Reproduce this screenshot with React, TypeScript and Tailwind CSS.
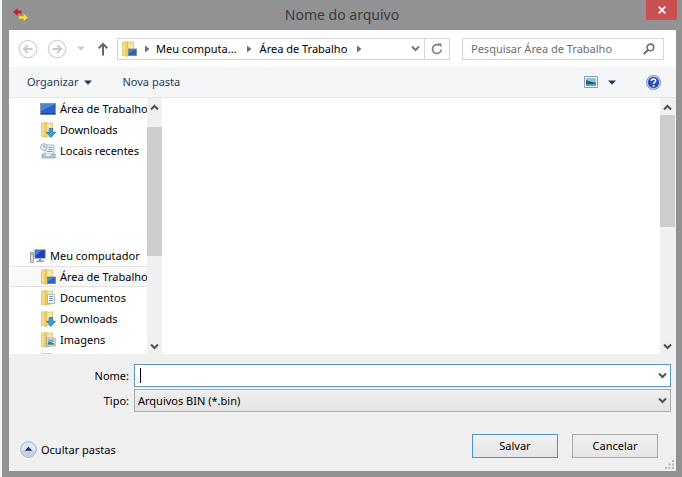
import React from "react";

type IconProps = { className?: string };

function Chevron({ up = false, light = false }: { up?: boolean; light?: boolean }) {
  return (
    <svg width="9" height="7" viewBox="0 0 9 7" fill="none" stroke={light ? "#777" : "#505050"} strokeWidth="2" aria-hidden="true">
      <path d={up ? "M1 5.5 4.5 2 8 5.5" : "M1 1.5 4.5 5 8 1.5"} />
    </svg>
  );
}

function RightTriangle() {
  return (
    <svg width="5" height="8" viewBox="0 0 5 8" aria-hidden="true">
      <path d="M0 0.5 4.5 4 0 7.5Z" fill="#6f6f6f" />
    </svg>
  );
}

function DownTriangle({ className = "text-[#1e395b]" }: IconProps) {
  return (
    <svg className={className} width="8" height="5" viewBox="0 0 8 5" aria-hidden="true">
      <path d="M0 0.5H8L4 4.8Z" fill="currentColor" />
    </svg>
  );
}

function FolderBase() {
  return (
    <>
      <path d="M1.5 1 7 .4V14l-5.5.8Z" fill="#f3dd86" stroke="#d9bd5c" strokeWidth=".7" />
      <path d="M5 1.6 12.5.8V13.6L5 15.4Z" fill="#f8e9a6" stroke="#d6ba5a" strokeWidth=".7" />
      <path d="M5 1.6V15.4L7.2 14.8V1.5Z" fill="#e7c964" />
    </>
  );
}

type Kind = "desktop" | "downloads" | "recent" | "computer" | "desktopFolder" | "documents" | "pictures" | "folder";

function ItemIcon({ kind }: { kind: Kind }) {
  return (
    <svg className="shrink-0" width="16" height="16" viewBox="0 0 16 16" aria-hidden="true">
      {kind === "desktop" && (
        <>
          <rect x=".5" y="2.5" width="15" height="11" fill="#2c62bd" stroke="#7f95ad" />
          <path d="M1 3H15L1 10Z" fill="#4a86dc" />
          <path d="M1 12H15V13.2H1Z" fill="#25426f" />
        </>
      )}
      {kind === "computer" && (
        <>
          <rect x=".6" y="4.5" width="2.8" height="10" fill="#d5dae1" stroke="#8692a3" strokeWidth=".8" />
          <path d="M1.3 6.4H2.8" stroke="#4b5d79" strokeWidth=".8" />
          <rect x="4.6" y="1.6" width="10.8" height="8.8" fill="#1f3fb3" stroke="#a9b5c8" strokeWidth="1" />
          <path d="M5.2 2.2H12L5.2 8Z" fill="#5279dd" />
          <path d="M9 10.8H11.4V12.6H14V14H6.4V12.6H9Z" fill="#8f9cae" />
        </>
      )}
      {kind === "recent" && (
        <>
          <path d="M5 2H14V12H5Z" fill="#eef5fb" stroke="#8aa4bc" strokeWidth=".8" />
          <path d="M8.5 4.5H12.5M8.5 6.5H12.5M7 8.5H12.5" stroke="#5f9bcb" />
          <path d="M2 11H15.2V15H2Z" fill="#b9c6d2" stroke="#8899a8" strokeWidth=".7" />
          <path d="M5 11H11L9.8 13H6.2Z" fill="#eef2f5" />
          <circle cx="3.9" cy="4" r="3.3" fill="#f4f6f7" stroke="#939da6" strokeWidth=".9" />
          <path d="M3.9 2V4.2H5.6" fill="none" stroke="#54616c" strokeWidth=".8" />
        </>
      )}
      {kind === "downloads" && (
        <>
          <FolderBase />
          <path d="M9.2 6.5H12.8V10.3H15.5L11 15.5 6.5 10.3H9.2Z" fill="#3f9ed6" stroke="#2474ac" strokeWidth=".8" />
        </>
      )}
      {kind === "desktopFolder" && (
        <>
          <FolderBase />
          <rect x="7.5" y="8" width="8" height="6.6" fill="#2f63ad" stroke="#6c88ab" strokeWidth=".8" />
          <path d="M8 8.5H14L8 12.5Z" fill="#5288cf" />
        </>
      )}
      {kind === "documents" && (
        <>
          <FolderBase />
          <path d="M7.5 4.5H14.5V13.5H7.5Z" fill="#fbfcfe" stroke="#9ba9b7" strokeWidth=".8" />
          <path d="M9 6.5H13M9 8.5H13M9 10.5H13" stroke="#6f8bb0" strokeWidth=".9" />
        </>
      )}
      {kind === "pictures" && (
        <>
          <FolderBase />
          <path d="M6.5 6H15.2V14H6.5Z" fill="#eaf4fa" stroke="#8b9cab" strokeWidth=".8" />
          <path d="M7.6 7.2H14.1V10H7.6Z" fill="#73b7dd" />
          <path d="M7.6 12.8V10.6L10 9.8 14.1 11.2V12.8Z" fill="#47805d" />
        </>
      )}
      {kind === "folder" && <path d="M1 0H12V15H1Z" fill="#eed98a" />}
    </svg>
  );
}

function TreeItem({ kind, label, root = false, selected = false }: { kind: Kind; label?: string; root?: boolean; selected?: boolean }) {
  return (
    <li>
      <button
        type="button"
        className={
          "flex h-[21px] w-full items-center border-y text-left whitespace-nowrap " +
          (root ? "gap-1 pl-5 " : "gap-1 pl-[30px] ") +
          (selected ? "border-[#e2e2e2] bg-[#f9f9f9]" : "border-transparent")
        }
      >
        <ItemIcon kind={kind} />
        {label && <span>{label}</span>}
      </button>
    </li>
  );
}

function ScrollBar({ lead, thumb }: { lead: string; thumb: string }) {
  return (
    <div className="flex w-[15px] shrink-0 flex-col items-center bg-[#f0f0f0]">
      <div className={"flex shrink-0 justify-center pt-1.5 " + lead}>
        <Chevron up />
      </div>
      <div className={"w-full shrink-0 bg-[#cdcdcd] " + thumb} />
      <div className="mt-auto pb-1">
        <Chevron />
      </div>
    </div>
  );
}

function NavCircle({ label, forward = false }: { label: string; forward?: boolean }) {
  return (
    <button type="button" aria-label={label}>
      <svg width="20" height="20" viewBox="0 0 20 20" fill="none" aria-hidden="true">
        <circle cx="10" cy="10" r="8.7" stroke="#d3d3d3" strokeWidth="1.3" />
        <path
          d={forward ? "M5.5 10H14M10.3 6.2 14 10 10.3 13.8" : "M14.5 10H6M9.7 6.2 6 10 9.7 13.8"}
          stroke="#c8c8c8"
          strokeWidth="1.8"
        />
      </svg>
    </button>
  );
}

export default function App() {
  return (
    <div className="flex min-h-screen flex-col border-l-2 border-[#f4f4f4] bg-[#929294] pr-1.5 pb-1.5 pl-[7px] font-['Noto_Sans','Open_Sans',sans-serif] text-[11px] leading-4 text-black">
      <header className="relative flex h-[30px] items-center">
        <svg className="ml-1" width="15" height="14" viewBox="0 0 15 14" aria-hidden="true">
          <path d="M0 4 4.5 0V2.6H8.5V5.4H4.5V8Z" fill="#c3202f" />
          <path d="M15 9.5 10.5 5.5V8.1H5.5V10.9H10.5V13.5Z" fill="#f3e04a" stroke="#b59b28" strokeWidth=".5" />
        </svg>
        <h1 className="flex-1 pr-5 text-center text-sm text-[#3b3b3b]">Nome do arquivo</h1>
        <button type="button" aria-label="Fechar" className="absolute -right-px top-0 flex h-5 w-[31px] items-center justify-center bg-[#c8504f]">
          <svg width="8" height="8" viewBox="0 0 8 8" stroke="#fff" strokeWidth="1.7" aria-hidden="true">
            <path d="M.7.7 7.3 7.3M7.3.7.7 7.3" />
          </svg>
        </button>
      </header>

      <main className="flex flex-1 flex-col bg-[#f0f0f0]">
        <nav className="flex h-[37px] items-center bg-white pr-3 pl-[9px]">
          <div className="flex items-center gap-[9px]">
            <NavCircle label="Voltar" />
            <NavCircle label="Avançar" forward />
          </div>
          <button type="button" aria-label="Locais anteriores" className="ml-2.5">
            <DownTriangle className="text-[#cccccc]" />
          </button>
          <button type="button" aria-label="Acima" className="mr-2 ml-3">
            <svg width="12" height="14" viewBox="0 0 12 14" fill="none" stroke="#686868" strokeWidth="2" aria-hidden="true">
              <path d="M6 13.5V2M1.7 6.3 6 2 10.3 6.3" />
            </svg>
          </button>
          <div className="flex h-[22px] min-w-0 flex-1 items-center border border-[#d5d5d5] pl-[3px] whitespace-nowrap">
            <ItemIcon kind="desktopFolder" />
            <span className="ml-2"><RightTriangle /></span>
            <button type="button" className="ml-1.5">Meu computa...</button>
            <span className="ml-2.5"><RightTriangle /></span>
            <button type="button" className="ml-2">Área de Trabalho</button>
            <span className="ml-2.5"><RightTriangle /></span>
            <button type="button" aria-label="Locais recentes" className="mr-1 ml-auto"><Chevron light /></button>
            <button type="button" aria-label="Atualizar" className="flex h-full w-[25px] items-center justify-center border-l border-[#d5d5d5]">
              <svg width="12" height="12" viewBox="0 0 12 12" fill="none" aria-hidden="true">
                <path d="M8.2 2.3A4.4 4.4 0 1 0 10.3 6.5" stroke="#858585" strokeWidth="1.7" />
                <path d="M6.3.3H10.5V4.6Z" fill="#858585" />
              </svg>
            </button>
          </div>
          <div className="ml-3 flex h-[22px] w-[202px] items-center border border-[#d5d5d5] pr-2 pl-2">
            <input
              type="search"
              aria-label="Pesquisar"
              placeholder="Pesquisar Área de Trabalho"
              className="min-w-0 flex-1 bg-transparent outline-none placeholder:text-[#6d6d6d]"
            />
            <svg width="12" height="12" viewBox="0 0 12 12" fill="none" stroke="#6d6d6d" aria-hidden="true">
              <circle cx="7.4" cy="4.4" r="3.3" strokeWidth="1.6" />
              <path d="M5 6.8.9 11" strokeWidth="2" />
            </svg>
          </div>
        </nav>

        <div className="flex h-[31px] items-center border-b border-[#e3e5e8] bg-[#f4f6f8] pr-[15px] pl-[18px] text-[#1e395b]">
          <button type="button" className="flex items-center gap-1.5">Organizar <DownTriangle /></button>
          <button type="button" className="ml-[30px]">Nova pasta</button>
          <button type="button" aria-label="Modo de exibição" className="ml-auto">
            <svg width="14" height="12" viewBox="0 0 14 12" aria-hidden="true">
              <path d="M.5.5H13.5V11.5H.5Z" fill="#fff" stroke="#8b9bad" />
              <path d="M2 2H12V6H2Z" fill="#8cc5e6" />
              <path d="M2 4 6 5.5 12 6.5V10H2Z" fill="#245a73" />
              <path d="M2 8.5 12 7.5V10H2Z" fill="#609dbd" />
            </svg>
          </button>
          <button type="button" aria-label="Mais opções" className="ml-2.5"><DownTriangle /></button>
          <button type="button" aria-label="Ajuda" className="ml-[30px]">
            <svg width="15" height="15" viewBox="0 0 14 14" aria-hidden="true">
              <circle cx="7" cy="7" r="6.5" fill="#d5dcef" stroke="#8e9cc0" />
              <circle cx="7" cy="7" r="5.3" fill="#2d50b4" />
              <path d="M5 5.6C5 3.2 9 3.2 9 5.4 9 6.8 7.1 6.8 7.1 8.4" fill="none" stroke="#fff" strokeWidth="1.4" />
              <circle cx="7.1" cy="10.2" r=".9" fill="#fff" />
            </svg>
          </button>
        </div>

        <section className="flex h-64 bg-white">
          <div className="w-[138px] shrink-0 overflow-hidden pl-px">
            <ul>
              <TreeItem kind="desktop" label="Área de Trabalho" />
              <TreeItem kind="downloads" label="Downloads" />
              <TreeItem kind="recent" label="Locais recentes" />
            </ul>
            <ul className="mt-[84px]">
              <TreeItem kind="computer" label="Meu computador" root />
              <TreeItem kind="desktopFolder" label="Área de Trabalho" selected />
              <TreeItem kind="documents" label="Documentos" />
              <TreeItem kind="downloads" label="Downloads" />
              <TreeItem kind="pictures" label="Imagens" />
              <TreeItem kind="folder" />
            </ul>
          </div>
          <ScrollBar lead="h-[29px]" thumb="h-[129px]" />
          <div className="flex-1" />
          <ScrollBar lead="h-[17px]" thumb="h-[112px]" />
          <div className="w-px bg-[#f0f0f0]" />
        </section>

        <form className="flex flex-1 flex-col pt-2.5" onSubmit={(e) => e.preventDefault()}>
          <div className="grid grid-cols-[120px_1fr] items-center gap-x-[5px] gap-y-0.5 pr-[5px]">
            <label htmlFor="nome" className="text-right">Nome:</label>
            <div className="relative">
              <input id="nome" type="text" className="block h-[23px] w-full border border-[#5b94bd] bg-white px-1 outline-none" />
              <span className="absolute top-1 left-1.5 h-[15px] w-px bg-black" />
              <span className="pointer-events-none absolute inset-y-0 right-1 flex items-center"><Chevron /></span>
            </div>
            <label htmlFor="tipo" className="text-right">Tipo:</label>
            <div className="relative">
              <select
                id="tipo"
                className="block h-[23px] w-full appearance-none border border-[#acacac] bg-linear-to-b from-[#efefef] to-[#e4e4e4] px-[3px] outline-none"
              >
                <option>Arquivos BIN (*.bin)</option>
              </select>
              <span className="pointer-events-none absolute inset-y-0 right-1 flex items-center"><Chevron /></span>
            </div>
          </div>

          <div className="mt-[22px] flex items-end pr-[18px] pl-[11px]">
            <button type="button" className="flex items-center gap-1">
              <svg width="17" height="17" viewBox="0 0 17 17" aria-hidden="true">
                <circle cx="8.5" cy="8.5" r="7.8" fill="#e3e8f0" stroke="#a3adbd" />
                <path d="M2 9.5H15A6.5 6.5 0 0 1 2 9.5Z" fill="#c4cfdf" />
                <path d="M4.6 9.8 8.5 5.8 12.4 9.8Z" fill="#1c2f66" />
              </svg>
              Ocultar pastas
            </button>
            <button type="submit" className="ml-auto h-6 w-[86px] border border-[#4f94c4] bg-linear-to-b from-[#f1f1f1] to-[#e5e5e5]">Salvar</button>
            <button type="button" className="ml-3.5 h-6 w-[86px] border border-[#acacac] bg-linear-to-b from-[#f1f1f1] to-[#e5e5e5]">Cancelar</button>
          </div>
          <svg className="mt-auto mr-0.5 mb-0.5 self-end" width="9" height="9" viewBox="0 0 9 9" fill="#b9b9b9" aria-hidden="true">
            <path d="M7 0H9V2H7ZM7 3.5H9V5.5H7ZM3.5 3.5H5.5V5.5H3.5ZM7 7H9V9H7ZM3.5 7H5.5V9H3.5ZM0 7H2V9H0Z" />
          </svg>
        </form>
      </main>
    </div>
  );
}
